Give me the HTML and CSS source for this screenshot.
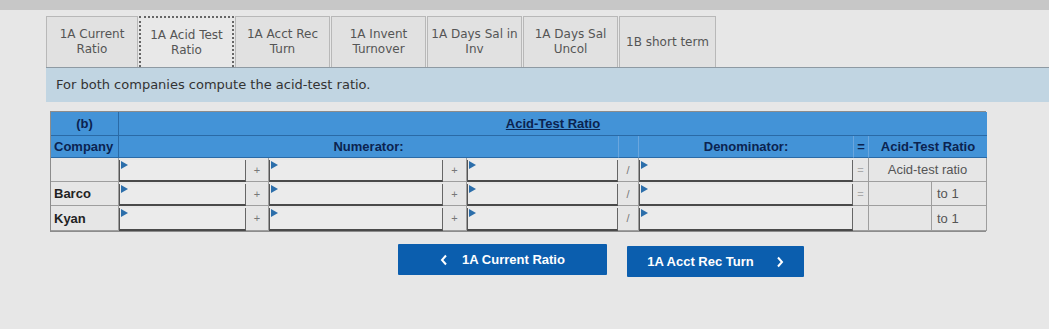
FILE: index.html
```html
<!DOCTYPE html>
<html lang="en">
<head>
<meta charset="utf-8">
<title>Acid-Test Ratio</title>
<link rel="stylesheet" href="styles.css">
</head>
<body>
<div class="topbar"></div>
<div class="page">
  <div class="tabs">
    <div class="tab w93">1A Current<br>Ratio</div>
    <div class="tab active w95">1A Acid Test<br>Ratio</div>
    <div class="tab w95">1A Acct Rec<br>Turn</div>
    <div class="tab w95">1A Invent<br>Turnover</div>
    <div class="tab w95">1A Days Sal in<br>Inv</div>
    <div class="tab w96">1A Days Sal<br>Uncol</div>
    <div class="tab w97">1B short term</div>
  </div>
  <div class="instruction">For both companies compute the acid-test ratio.</div>

  <div class="ratio-table">
    <div class="hd hd-b">(b)</div>
    <div class="hd hd-title"><span class="ul">Acid-Test Ratio</span></div>

    <div class="hd hd-company">Company</div>
    <div class="hd hd-num">Numerator:</div>
    <div class="hd hd-slash"></div>
    <div class="hd hd-den">Denominator:</div>
    <div class="hd hd-eq">=</div>
    <div class="hd hd-res">Acid-Test Ratio</div>

    <div class="cell name"></div>
    <div class="cell input"><i class="tri"></i></div>
    <div class="cell op">+</div>
    <div class="cell input"><i class="tri"></i></div>
    <div class="cell op">+</div>
    <div class="cell input"><i class="tri"></i></div>
    <div class="cell op">/</div>
    <div class="cell input"><i class="tri"></i></div>
    <div class="cell op eq">=</div>
    <div class="cell label span2">Acid-test ratio</div>

    <div class="cell name">Barco</div>
    <div class="cell input"><i class="tri"></i></div>
    <div class="cell op">+</div>
    <div class="cell input"><i class="tri"></i></div>
    <div class="cell op">+</div>
    <div class="cell input"><i class="tri"></i></div>
    <div class="cell op">/</div>
    <div class="cell input"><i class="tri"></i></div>
    <div class="cell op eq">=</div>
    <div class="cell blank"></div>
    <div class="cell to1">to 1</div>

    <div class="cell name">Kyan</div>
    <div class="cell input"><i class="tri"></i></div>
    <div class="cell op">+</div>
    <div class="cell input"><i class="tri"></i></div>
    <div class="cell op">+</div>
    <div class="cell input"><i class="tri"></i></div>
    <div class="cell op">/</div>
    <div class="cell input"><i class="tri"></i></div>
    <div class="cell op eq"></div>
    <div class="cell blank"></div>
    <div class="cell to1">to 1</div>
  </div>

  <div class="nav">
    <button class="btn prev">
      <svg width="8" height="12" viewBox="0 0 8 12"><path d="M6 1.5 L2 6 L6 10.5" fill="none" stroke="#fff" stroke-width="2"/></svg>
      <span>1A Current Ratio</span>
    </button>
    <button class="btn next">
      <span>1A Acct Rec Turn</span>
      <svg width="8" height="12" viewBox="0 0 8 12"><path d="M2 1.5 L6 6 L2 10.5" fill="none" stroke="#fff" stroke-width="2"/></svg>
    </button>
  </div>
</div>
</body>
</html>
```

FILE: styles.css
```css
html, body {
  margin: 0;
  padding: 0;
  background: #e4e4e4;
  width: 1049px;
  height: 329px;
  overflow: hidden;
}

.topbar {
  height: 10px;
  background: #c7c7c7;
}

.page {
  padding-left: 46px;
  background: #e7e7e7;
  height: 319px;
}

.tabs {
  display: flex;
  gap: 1px;
  padding-top: 6px;
  height: 51px;
  align-items: stretch;
}

.tab {
  box-sizing: border-box;
  height: 51px;
  border: 1px solid #b8b8b8;
  border-bottom: none;
  background: #e1e1e1;
  color: #555;
  font-family: "DejaVu Sans", Verdana, sans-serif;
  font-size: 12px;
  line-height: 15px;
  text-align: center;
  display: flex;
  align-items: center;
  justify-content: center;
  white-space: nowrap;
}

.tab.active {
  border: 2px dotted #666;
  border-bottom: none;
  background: #e8e8e8;
}

.w93 { width: 92px; }
.w95 { width: 95px; }
.w96 { width: 95px; }
.w97 { width: 97px; }

.instruction {
  height: 34px;
  border-top: 1px solid #8e9aa3;
  background: #c1d5e2;
  color: #333;
  font-family: "DejaVu Sans", Verdana, sans-serif;
  font-size: 13px;
  line-height: 34px;
  padding-left: 10px;
}

.ratio-table {
  margin-top: 9px;
  margin-left: 4px;
  width: 936px;
  display: grid;
  grid-template-columns: 68px 127px 23px 174px 24px 151px 21px 214px 16px 62px 56px;
  grid-template-rows: 24px 22px 24px 24px 25px;
  font-family: "Liberation Sans", Arial, sans-serif;
  font-size: 13px;
  border: 1px solid #8c8c8c;
  box-sizing: border-box;
}

.hd {
  background: #4393d7;
  color: #0b2350;
  font-weight: bold;
  display: flex;
  align-items: center;
  justify-content: center;
  border-bottom: 1px solid #2a6aa6;
}

.hd-b { grid-column: 1; border-right: 1px solid #2a6aa6; }
.hd-title { grid-column: 2 / 12; }
.ul { text-decoration: underline; }

.hd-company { grid-column: 1; justify-content: flex-start; padding-left: 3px; border-right: 1px solid #2a6aa6; }
.hd-num { grid-column: 2 / 7; }
.hd-slash { grid-column: 7; border-left: 1px solid #6aa6de; border-right: 1px solid #6aa6de; }
.hd-den { grid-column: 8; }
.hd-eq { grid-column: 9; border-left: 1px solid #6aa6de; border-right: 1px solid #6aa6de; }
.hd-res { grid-column: 10 / 12; }

.cell {
  background: #e6e6e6;
  border-right: 1px solid #9e9e9e;
  border-bottom: 1px solid #9e9e9e;
  display: flex;
  align-items: center;
  position: relative;
  box-sizing: border-box;
}

.name {
  font-weight: bold;
  color: #222;
  padding-left: 3px;
}

.input {
  background: #ebebeb;
  border-left: 1px solid #555;
  border-bottom: 2px solid #4a4a4a;
  border-right: 1px solid #666;
  margin-top: 2px;
}

.tri {
  position: absolute;
  left: 1px;
  top: 1px;
  width: 0;
  height: 0;
  border-top: 4px solid transparent;
  border-bottom: 4px solid transparent;
  border-left: 7px solid #2c6eaa;
}

.op {
  justify-content: center;
  color: #777;
  font-size: 11px;
}

.op.eq { color: #aaa; }

.label {
  justify-content: center;
  color: #555;
}

.span2 { grid-column: 10 / 12; }

.to1 {
  color: #555;
  padding-left: 5px;
  border-left: 1px solid #9e9e9e;
}

.blank { border-right: none; }

.nav {
  display: flex;
  gap: 20px;
  margin-top: 12px;
  padding-left: 352px;
}

.btn {
  height: 31px;
  border: none;
  border-radius: 1px;
  background: #0b5eae;
  color: #fff;
  font-family: "Liberation Sans", Arial, sans-serif;
  font-weight: bold;
  font-size: 13px;
  display: flex;
  align-items: center;
  justify-content: center;
  gap: 14px;
  padding: 0;
}

.btn.prev { width: 209px; }
.btn.next { width: 177px; gap: 22px; margin-top: 2px; }
```
